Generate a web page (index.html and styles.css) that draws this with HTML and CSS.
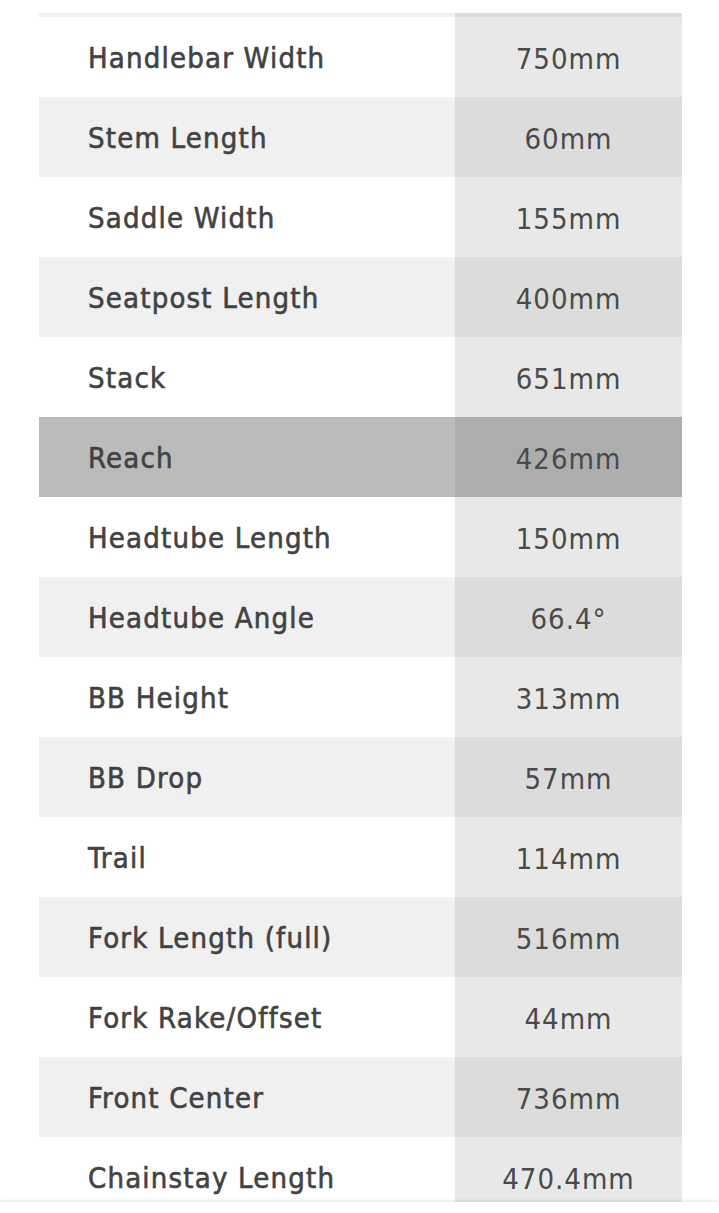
FILE: index.html
```html
<!DOCTYPE html>
<html>
<head>
<meta charset="utf-8">
<link rel="stylesheet" href="styles.css">
</head>
<body>
<div class="page">
  <div class="table">
    <div class="strip"><span class="strip-l"></span><span class="strip-r"></span></div>
    <div class="row"><div class="label">Handlebar Width</div><div class="value">750mm</div></div>
    <div class="row alt"><div class="label">Stem Length</div><div class="value">60mm</div></div>
    <div class="row"><div class="label">Saddle Width</div><div class="value">155mm</div></div>
    <div class="row alt"><div class="label">Seatpost Length</div><div class="value">400mm</div></div>
    <div class="row"><div class="label">Stack</div><div class="value">651mm</div></div>
    <div class="row hl"><div class="label">Reach</div><div class="value">426mm</div></div>
    <div class="row"><div class="label">Headtube Length</div><div class="value">150mm</div></div>
    <div class="row alt"><div class="label">Headtube Angle</div><div class="value">66.4°</div></div>
    <div class="row"><div class="label">BB Height</div><div class="value">313mm</div></div>
    <div class="row alt"><div class="label">BB Drop</div><div class="value">57mm</div></div>
    <div class="row"><div class="label">Trail</div><div class="value">114mm</div></div>
    <div class="row alt"><div class="label">Fork Length (full)</div><div class="value">516mm</div></div>
    <div class="row"><div class="label">Fork Rake/Offset</div><div class="value">44mm</div></div>
    <div class="row alt"><div class="label">Front Center</div><div class="value">736mm</div></div>
    <div class="row"><div class="label">Chainstay Length</div><div class="value">470.4mm</div></div>
  </div>
</div>
<div class="bottom-bar"></div>
</body>
</html>
```
FILE: styles.css
```css
html, body {
  margin: 0;
  padding: 0;
  background: #ffffff;
  overflow: hidden;
}
.page {
  height: 1213px;
  overflow: hidden;
  padding-top: 13px;
  box-sizing: border-box;
  font-family: "DejaVu Sans Condensed", "DejaVu Sans", sans-serif;
  color: #444444;
}
.table {
  margin-left: 39px;
  width: 643px;
}
.strip {
  display: flex;
  height: 4px;
}
.strip-l {
  width: 416px;
  background: #f0f0f0;
}
.strip-r {
  flex: 1;
  background: #dcdcdc;
}
.row {
  display: flex;
  height: 80px;
}
.label {
  width: 416px;
  box-sizing: border-box;
  padding-left: 49px;
  padding-top: 2px;
  display: flex;
  align-items: center;
  background: #ffffff;
  font-size: 29px;
  letter-spacing: 1.2px;
  -webkit-text-stroke: 0.6px #444444;
  color: #424242;
}
.value {
  flex: 1;
  display: flex;
  align-items: center;
  justify-content: center;
  background: #e8e8e8;
  font-size: 29px;
  letter-spacing: 1px;
  padding-top: 3px;
  box-sizing: border-box;
  color: #4a4a4a;
}
.row.alt .label { background: #f0f0f0; }
.row.alt .value { background: #dcdcdc; }
.row.hl .label { background: #bbbbbb; }
.row.hl .value { background: #adadad; }
.bottom-bar {
  position: fixed;
  left: 0;
  right: 0;
  bottom: 0;
  height: 11px;
  background: #ffffff;
  box-shadow: 0 -1px 3px rgba(0, 0, 0, 0.12);
}
```
